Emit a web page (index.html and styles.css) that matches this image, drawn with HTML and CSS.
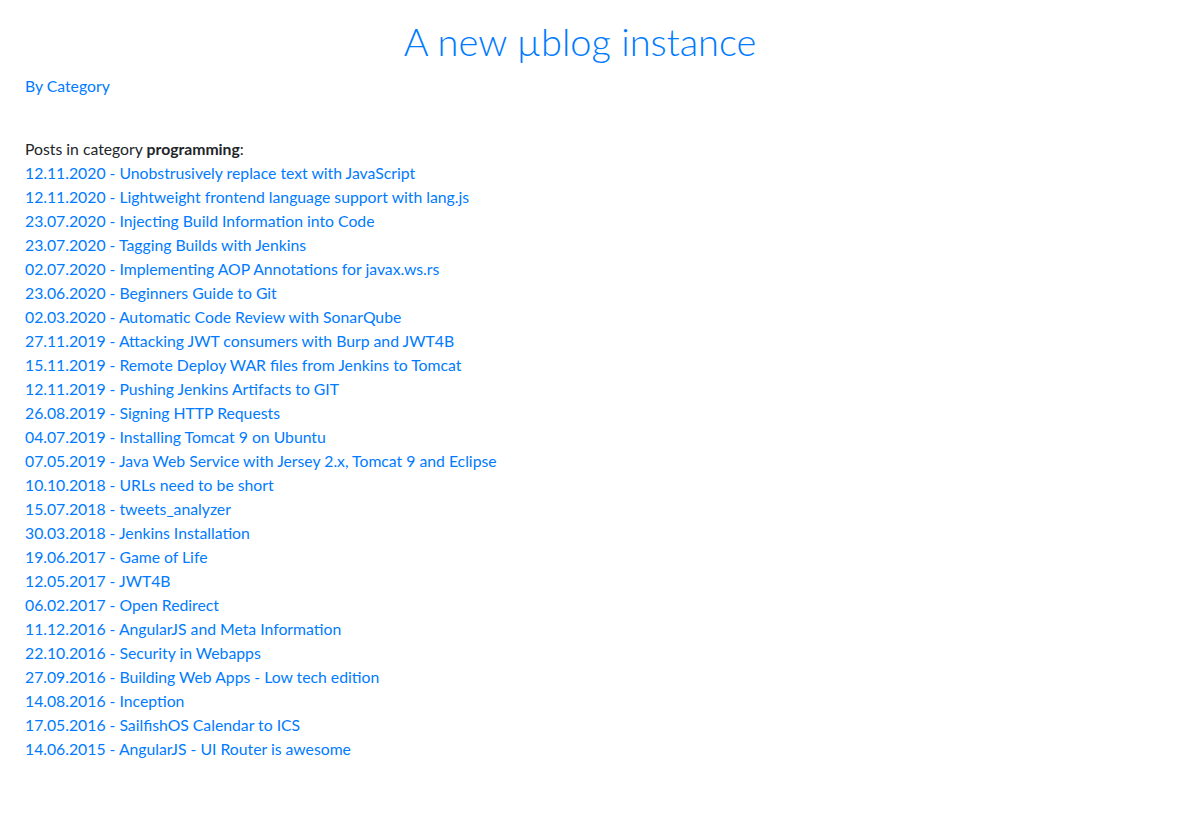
FILE: index.html
```html
<!DOCTYPE html>
<html lang="en">
<head>
    <meta charset="UTF-8">
    <meta name="viewport" content="width=device-width, initial-scale=1.0">
    <title>A new µblog instance</title>
    <link rel="stylesheet" href="styles.css">
</head>
<body>

    <!-- Header -->
    <div class="header">
        <h1><a href="#">A new µblog instance</a></h1>
        <a href="#" class="nav-link">By Category</a>
    </div>

    <!-- Post List -->
    <div class="content">
        <p class="category">Posts in category <strong>programming</strong>:</p>
        <ul class="posts">
            <li><a href="#">12.11.2020 - Unobstrusively replace text with JavaScript</a></li>
            <li><a href="#">12.11.2020 - Lightweight frontend language support with lang.js</a></li>
            <li><a href="#">23.07.2020 - Injecting Build Information into Code</a></li>
            <li><a href="#">23.07.2020 - Tagging Builds with Jenkins</a></li>
            <li><a href="#">02.07.2020 - Implementing AOP Annotations for javax.ws.rs</a></li>
            <li><a href="#">23.06.2020 - Beginners Guide to Git</a></li>
            <li><a href="#">02.03.2020 - Automatic Code Review with SonarQube</a></li>
            <li><a href="#">27.11.2019 - Attacking JWT consumers with Burp and JWT4B</a></li>
            <li><a href="#">15.11.2019 - Remote Deploy WAR files from Jenkins to Tomcat</a></li>
            <li><a href="#">12.11.2019 - Pushing Jenkins Artifacts to GIT</a></li>
            <li><a href="#">26.08.2019 - Signing HTTP Requests</a></li>
            <li><a href="#">04.07.2019 - Installing Tomcat 9 on Ubuntu</a></li>
            <li><a href="#">07.05.2019 - Java Web Service with Jersey 2.x, Tomcat 9 and Eclipse</a></li>
            <li><a href="#">10.10.2018 - URLs need to be short</a></li>
            <li><a href="#">15.07.2018 - tweets_analyzer</a></li>
            <li><a href="#">30.03.2018 - Jenkins Installation</a></li>
            <li><a href="#">19.06.2017 - Game of Life</a></li>
            <li><a href="#">12.05.2017 - JWT4B</a></li>
            <li><a href="#">06.02.2017 - Open Redirect</a></li>
            <li><a href="#">11.12.2016 - AngularJS and Meta Information</a></li>
            <li><a href="#">22.10.2016 - Security in Webapps</a></li>
            <li><a href="#">27.09.2016 - Building Web Apps - Low tech edition</a></li>
            <li><a href="#">14.08.2016 - Inception</a></li>
            <li><a href="#">17.05.2016 - SailfishOS Calendar to ICS</a></li>
            <li><a href="#">14.06.2015 - AngularJS - UI Router is awesome</a></li>
        </ul>
    </div>

</body>
</html>
```

FILE: styles.css
```css
/* General Styles */
body {
    font-family: 'Lato', 'Liberation Sans', sans-serif;
    font-size: 15.75px;
    line-height: 24px;
    margin: 0;
    padding: 0 25px;
    color: #212529;
    background: #fff;
}

a {
    color: #007bff;
    text-decoration: none;
}

/* Header */
.header {
    padding-top: 17px;
}

.header h1 {
    margin: 0 17px 9px 0;
    font-size: 38px;
    font-weight: 300;
    line-height: 48px;
    text-align: center;
}

.nav-link {
    display: inline-block;
}

/* Post List */
.content {
    margin-top: 39px;
}

.category {
    margin: 0;
}

.posts {
    list-style: none;
    margin: 0;
    padding: 0;
}
```
